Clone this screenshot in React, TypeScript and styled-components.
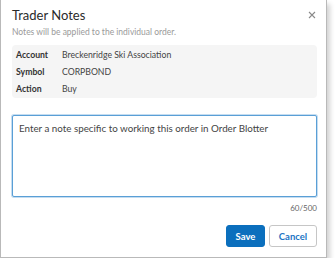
import styled, { createGlobalStyle } from 'styled-components';

const GlobalStyle = createGlobalStyle`
  html, body {
    margin: 0;
    padding: 0;
    background: #fff;
  }
  body {
    font-family: Lato, "Open Sans", sans-serif;
    color: #333;
  }
`;

type Detail = {
  label: string;
  value: string;
};

const details: Detail[] = [
  { label: 'Account', value: 'Breckenridge Ski Association' },
  { label: 'Symbol', value: 'CORPBOND' },
  { label: 'Action', value: 'Buy' },
];

const noteText = 'Enter a note specific to working this order in Order Blotter';

function App() {
  return (
    <>
      <GlobalStyle />
      <Dialog>
        <Header>
          <Title>Trader Notes</Title>
          <CloseButton aria-label='Close'>
            <svg width='8' height='8' viewBox='0 0 8 8'>
              <path d='M1 1L7 7M7 1L1 7' stroke='#8a8a8a' strokeWidth='1.1' />
            </svg>
          </CloseButton>
        </Header>
        <Subtitle>Notes will be applied to the individual order.</Subtitle>
        <InfoBox>
          {details.map((d) => (
            <InfoRow key={d.label}>
              <span className='label'>{d.label}</span>
              <span className='value'>{d.value}</span>
            </InfoRow>
          ))}
        </InfoBox>
        <NoteArea defaultValue={noteText} />
        <Counter>{noteText.length}/500</Counter>
        <Footer>
          <Button $primary $width={39}>Save</Button>
          <Button $width={48}>Cancel</Button>
        </Footer>
      </Dialog>
    </>
  );
}

export default App;

const Dialog = styled.div`
  width: 327px;
  height: 258px;
  box-sizing: border-box;
  background: #fff;
  border: 1px solid #b9b9b9;
  border-top: none;
  box-shadow: 3px 4px 5px rgba(0, 0, 0, 0.18);
  padding: 0 9px 0 11px;
  display: flex;
  flex-direction: column;
`;

const Header = styled.div`
  display: flex;
  align-items: center;
  justify-content: space-between;
  height: 24px;
  padding-top: 3px;
`;

const Title = styled.div`
  font-size: 13px;
  color: #2b2b2b;
`;

const CloseButton = styled.button`
  border: none;
  background: none;
  padding: 0;
  margin-right: 1px;
  display: flex;
  cursor: pointer;
`;

const Subtitle = styled.div`
  font-size: 8.5px;
  color: #9a9a9a;
`;

const InfoBox = styled.div`
  margin-top: 8px;
  background: #f5f5f5;
  border-radius: 4px;
  padding: 1px 4px;
  display: flex;
  flex-direction: column;
`;

const InfoRow = styled.div`
  display: flex;
  align-items: center;
  height: 17px;
  font-size: 8.7px;
  color: #444;
  .label {
    width: 46px;
    font-weight: 700;
    color: #333;
  }
`;

const NoteArea = styled.textarea`
  margin-top: 17px;
  height: 82px;
  box-sizing: border-box;
  resize: none;
  border: 1px solid #5a9fd6;
  box-shadow: 0 0 0 1px rgba(90, 159, 214, 0.35);
  border-radius: 2px;
  padding: 6px 6px;
  font-family: Lato, "Open Sans", sans-serif;
  font-size: 9.8px;
  color: #444;
  outline: none;
`;

const Counter = styled.div`
  align-self: flex-end;
  margin-top: 6px;
  font-size: 8px;
  color: #666;
`;

const Footer = styled.div`
  display: flex;
  justify-content: flex-end;
  gap: 4px;
  margin-top: 12px;
`;

const Button = styled.button<{ $primary?: boolean; $width: number }>`
  width: ${(p) => p.$width}px;
  height: 22px;
  box-sizing: border-box;
  border-radius: 3px;
  font-family: Lato, "Open Sans", sans-serif;
  font-size: 9.5px;
  font-weight: 700;
  cursor: pointer;
  padding: 0;
  background: ${(p) => (p.$primary ? '#0b6fbd' : '#fff')};
  color: ${(p) => (p.$primary ? '#fff' : '#1d74c4')};
  border: 1px solid ${(p) => (p.$primary ? '#0b6fbd' : '#c6c6c6')};
`;
